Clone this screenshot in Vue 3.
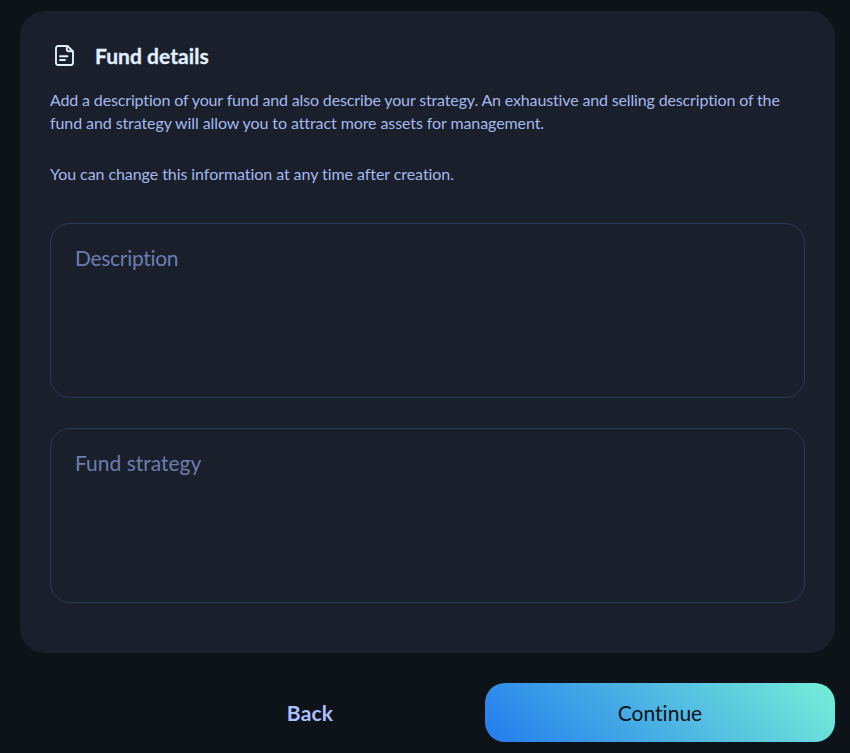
<script setup>
const fields = [
  { id: 'description', label: 'Description' },
  { id: 'strategy', label: 'Fund strategy' },
]
</script>

<template>
  <main class="page">
    <section class="card">
      <header class="heading">
        <svg class="icon" width="30" height="30" viewBox="0 0 30 30" fill="none" stroke="currentColor" stroke-width="1.9" stroke-linecap="round" stroke-linejoin="round">
          <path d="M17.5 5H8.2A2.2 2.2 0 0 0 6 7.2v14.6A2.2 2.2 0 0 0 8.2 24h12.6a2.2 2.2 0 0 0 2.2-2.2V10.5z" />
          <path d="M16.8 5.4v2.8a2 2 0 0 0 2 2h3.8M10 15.2h7.5M10 19h5" />
        </svg>
        <h1 class="title">Fund details</h1>
      </header>
      <p class="text">
        <span class="line first">Add a description of your fund and also describe your strategy. An exhaustive and selling description of the</span>
        <span class="line second">fund and strategy will allow you to attract more assets for management.</span>
      </p>
      <p class="text note"><span class="line third">You can change this information at any time after creation.</span></p>
      <div class="fields">
        <textarea v-for="f in fields" :key="f.id" class="field" :class="f.id" :placeholder="f.label" :aria-label="f.label"></textarea>
      </div>
    </section>
    <footer class="actions">
      <button class="btn back" type="button">Back</button>
      <button class="btn continue" type="button">Continue</button>
    </footer>
  </main>
</template>

<style>
body { background: #0e1219; overflow: hidden; }
</style>

<style scoped>
.page {
  box-sizing: border-box;
  height: 753px;
  padding: 11px 15px 0 20px;
  background: #0e1219;
  font-family: Lato, sans-serif;
  font-variant-ligatures: none;
}
.card {
  box-sizing: border-box;
  height: 642px;
  padding: 30px;
  border-radius: 25px;
  background: #1a1f2c;
}
.heading {
  display: flex;
  align-items: center;
  gap: 15px;
  height: 30px;
  color: #e1efff;
}
.title { margin: 0; font-size: 21px; line-height: 30px; font-weight: 700; white-space: nowrap; letter-spacing: 0.05px; -webkit-text-stroke: 0.3px currentColor; }
.text { margin: 17px 0 0; color: #a6b8ec; font-size: 16px; line-height: 23px; font-weight: 400; }
.note { margin-top: 28px; }
.line { display: block; width: max-content; white-space: nowrap; }
.first { letter-spacing: -0.145px; }
.second { letter-spacing: -0.09px; }
.third { letter-spacing: -0.065px; }
.fields { display: flex; flex-direction: column; gap: 30px; margin-top: 38px; }
.field {
  box-sizing: border-box;
  display: block;
  width: 100%;
  height: 175px;
  padding: 20px 24px;
  border: 1px solid #293b56;
  border-radius: 20px;
  outline: none;
  resize: none;
  background: transparent;
  color: #a6b8ec;
  font: 400 21px/28px Lato, sans-serif;
  font-variant-ligatures: none;
}
.field.description { letter-spacing: -0.3px; }
.field::placeholder { color: #6c7dae; opacity: 1; }
.actions { display: grid; grid-template-columns: 350px 350px; justify-content: end; margin-top: 30px; }
.btn { height: 59px; padding: 0; border: 0; border-radius: 20px; font: 400 21px/28px Lato, sans-serif; font-variant-ligatures: none; }
.back { background: transparent; color: #acbfff; font-weight: 700; letter-spacing: 0.2px; }
.continue { background: linear-gradient(45deg, #237cee, #76eed7); color: #0e1219; }
</style>
